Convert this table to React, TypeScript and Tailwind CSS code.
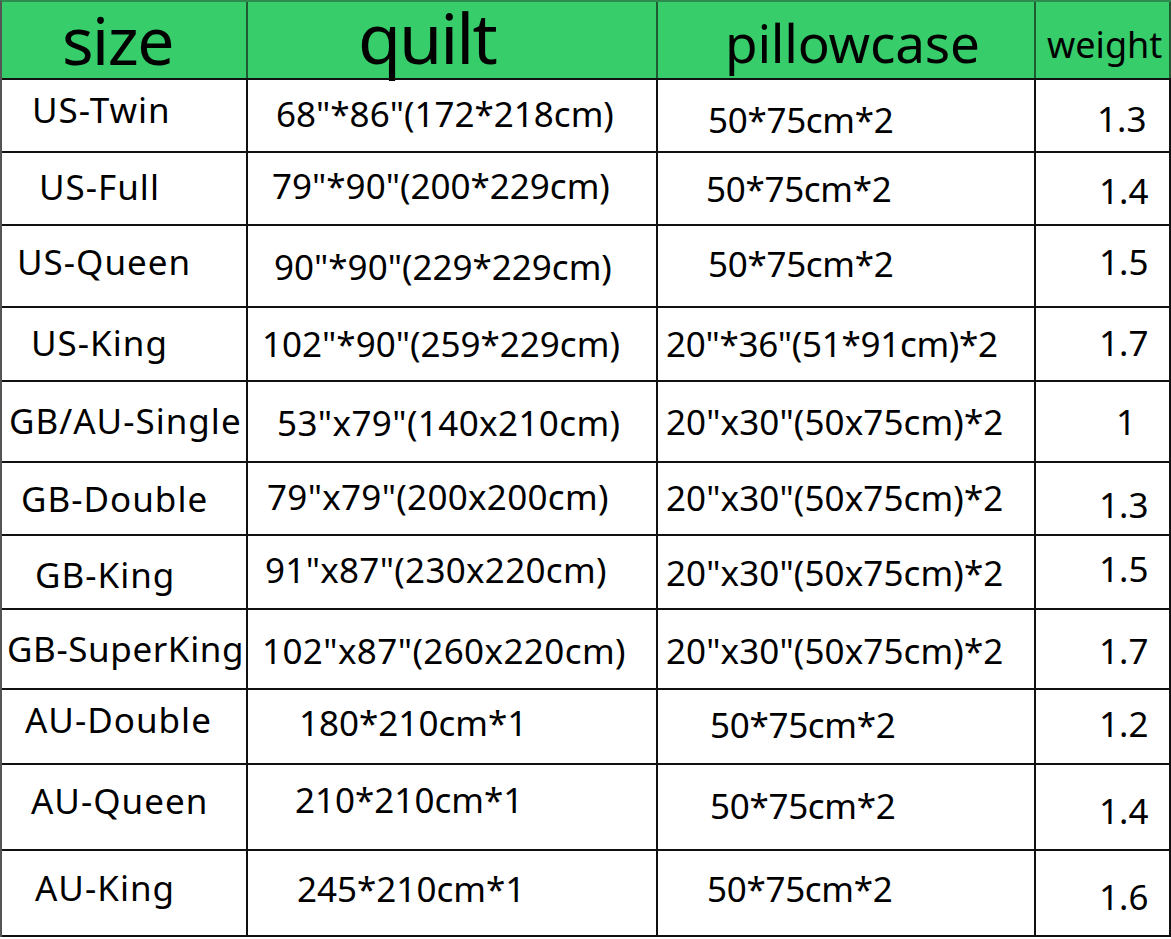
import React from "react";

type Cell = { t: string; c: string; s?: string };
type Row = { h: string; cells: Cell[] };

const rows: Row[] = [
  {
    h: "h-[73px]",
    cells: [
      { t: "US-Twin", c: "pl-[28px] pb-[13px]" },
      { t: "68\"*86\"(172*218cm)", c: "pl-[26px] pb-[5px]" },
      { t: "50*75cm*2", c: "pl-[48px] pt-[7px]" },
      { t: "1.3", c: "pl-[56px] pt-[5px]" },
    ],
  },
  {
    h: "h-[73px]",
    cells: [
      { t: "US-Full", c: "pl-[35px] pb-[5px]" },
      { t: "79\"*90\"(200*229cm)", c: "pl-[22px] pb-[7px]" },
      { t: "50*75cm*2", c: "pl-[46px]" },
      { t: "1.4", c: "pl-[58px] pt-[3px]" },
    ],
  },
  {
    h: "h-[82px]",
    cells: [
      { t: "US-Queen", c: "pl-[13px] pb-[9px]" },
      { t: "90\"*90\"(229*229cm)", c: "pl-[24px] pt-[1px]" },
      { t: "50*75cm*2", c: "pl-[48px] pb-[5px]" },
      { t: "1.5", c: "pl-[58px] pb-[9px]" },
    ],
  },
  {
    h: "h-[74px]",
    cells: [
      { t: "US-King", c: "pl-[27px] pb-[3px]" },
      { t: "102\"*90\"(259*229cm)", c: "pl-[12px] pb-[2px]" },
      { t: "20\"*36\"(51*91cm)*2", c: "pl-[6px] pb-[2px]" },
      { t: "1.7", c: "pl-[58px] pb-[3px]" },
    ],
  },
  {
    h: "h-[81px]",
    cells: [
      { t: "GB/AU-Single", c: "pl-[5px] pb-[2px]" },
      { t: "53\"x79\"(140x210cm)", c: "pl-[27px] pt-[2px]", s: "tracking-[0.4px]" },
      { t: "20\"x30\"(50x75cm)*2", c: "pl-[6px]", s: "tracking-[0.1px]" },
      { t: "1", c: "pl-[75px]" },
    ],
  },
  {
    h: "h-[73px]",
    cells: [
      { t: "GB-Double", c: "pl-[17px] pt-[0px]" },
      { t: "79\"x79\"(200x200cm)", c: "pl-[17px] pb-[4px]", s: "tracking-[0.3px]" },
      { t: "20\"x30\"(50x75cm)*2", c: "pl-[6px] pb-[2px]", s: "tracking-[0.1px]" },
      { t: "1.3", c: "pl-[58px] pt-[12px]" },
    ],
  },
  {
    h: "h-[74px]",
    cells: [
      { t: "GB-King", c: "pl-[31px] pt-[5px]" },
      { t: "91\"x87\"(230x220cm)", c: "pl-[15px] pb-[5px]", s: "tracking-[0.3px]" },
      { t: "20\"x30\"(50x75cm)*2", c: "pl-[6px]", s: "tracking-[0.1px]" },
      { t: "1.5", c: "pl-[58px] pb-[7px]" },
    ],
  },
  {
    h: "h-[80px]",
    cells: [
      { t: "GB-SuperKing", c: "pl-[3px] pb-[2px]", s: "tracking-[0.6px]" },
      { t: "102\"x87\"(260x220cm)", c: "pl-[12px] pt-[3px]", s: "tracking-[0.4px]" },
      { t: "20\"x30\"(50x75cm)*2", c: "pl-[6px] pt-[3px]", s: "tracking-[0.1px]" },
      { t: "1.7", c: "pl-[58px] pt-[3px]" },
    ],
  },
  {
    h: "h-[75px]",
    cells: [
      { t: "AU-Double", c: "pl-[21px] pb-[14px]" },
      { t: "180*210cm*1", c: "pl-[49px] pb-[8px]" },
      { t: "50*75cm*2", c: "pl-[50px] pb-[4px]" },
      { t: "1.2", c: "pl-[58px] pb-[6px]" },
    ],
  },
  {
    h: "h-[86px]",
    cells: [
      { t: "AU-Queen", c: "pl-[27px] pb-[13px]" },
      { t: "210*210cm*1", c: "pl-[45px] pb-[15px]" },
      { t: "50*75cm*2", c: "pl-[50px] pb-[3px]" },
      { t: "1.4", c: "pl-[58px] pt-[7px]" },
    ],
  },
  {
    h: "h-[86px]",
    cells: [
      { t: "AU-King", c: "pl-[31px] pb-[11px]" },
      { t: "245*210cm*1", c: "pl-[47px] pb-[9px]" },
      { t: "50*75cm*2", c: "pl-[47px] pb-[9px]" },
      { t: "1.6", c: "pl-[58px] pt-[7px]" },
    ],
  },
];

const widths = ["w-[246px]", "w-[410px]", "w-[378px]", "w-[135px]"];
const colSpan = ["ml-[2px]", "ml-[2px]", "ml-[2px]", "ml-[5px]"];
const colTrack = ["tracking-[1px]", "", "tracking-[-0.3px]", ""];

export default function App() {
  return (
    <div
      className="w-[1171px] h-[939px] bg-white text-black overflow-hidden"
      style={{ fontFamily: '"Noto Sans", "Open Sans", sans-serif' }}
    >
      <div className="flex flex-col border-l-2 border-t-2 border-l-[#555] border-t-[#2f8a50]">
        <div className="flex h-[78px] bg-[#36cd6a] border-b-2 border-b-[#111]">
          <div className={`${widths[0]} h-full border-r-2 border-[#1f5a33] flex items-start pl-[60px] pt-[3px]`}>
            <span className="text-[66px] leading-[1.05] tracking-[-1.5px] pb-[5px]">size</span>
          </div>
          <div className={`${widths[1]} h-full border-r-2 border-[#1f5a33] flex items-start pl-[110px] pt-[0px]`}>
            <span className="text-[70px] leading-[1.02] tracking-[-2px] pb-[6px]">quilt</span>
          </div>
          <div className={`${widths[2]} h-full border-r-2 border-[#1f5a33] flex items-start pl-[67px] pt-[14px]`}>
            <span className="text-[53px] leading-none tracking-[-0.2px]">pillowcase</span>
          </div>
          <div className={`${widths[3]} h-full border-r-2 border-[#1f5a33] flex items-start pl-[11px] pt-[25px]`}>
            <span className="text-[36px] leading-none">weight</span>
          </div>
        </div>
        {rows.map((r, i) => (
          <div key={i} className={`flex ${r.h} border-b-2 border-b-[#111]`}>
            {r.cells.map((c, j) => (
              <div
                key={j}
                className={`${widths[j]} h-full border-r-2 border-r-[#111] flex items-center ${c.c}`}
              >
                <span
                  className={`text-[35px] leading-none whitespace-nowrap ${colSpan[j]} ${c.s ?? colTrack[j]}`}
                >
                  {c.t}
                </span>
              </div>
            ))}
          </div>
        ))}
      </div>
    </div>
  );
}
